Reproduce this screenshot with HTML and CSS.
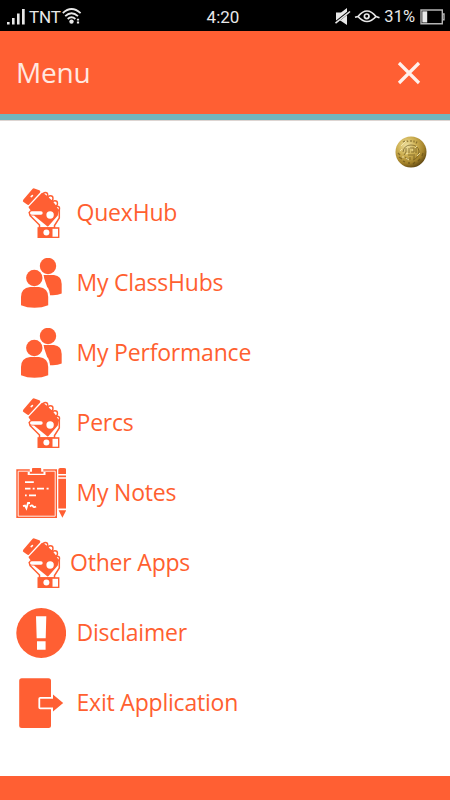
FILE: index.html
```html
<!DOCTYPE html>
<html lang="en">
<head>
  <meta charset="UTF-8" />
  <meta name="viewport" content="width=device-width, initial-scale=1.0" />
  <title>Menu</title>
  <link rel="stylesheet" href="styles.css">
</head>
<body>
  <!-- icons -->
  <svg class="sprite" width="0" height="0">
    <symbol id="hand" viewBox="0 0 50 50">
      <path fill="#fff" stroke="#ff5f33" stroke-width="1.5" d="M13.2 24.5Q13.3 27.5 16 29.5L23.5 37V40H38.5V37.5L43.3 30V20H30Z" />
      <path fill="#ff5f33" stroke="#ff5f33" stroke-width="3" stroke-linejoin="round" d="M8.4 12.8 17.8 1.8 22.8 3.7 12 15.4Z" />
      <path d="M15.2 8.6 16.4 7.6" stroke="#fff" stroke-width="1.6" stroke-linecap="round" />
      <g fill="#fff" stroke="#ff5f33" stroke-width="1.4">
        <circle cx="29.4" cy="6.8" r="2.3" />
        <circle cx="34.4" cy="10.4" r="2.6" />
        <circle cx="38.9" cy="15.4" r="2.6" />
        <circle cx="41.4" cy="20.4" r="2.1" />
      </g>
      <path fill="#ff5f33" stroke="#ff5f33" stroke-width="2" stroke-linejoin="round" d="M13.6 19.2 26.4 5.8 29 7.6 34 12 38.4 17 41.8 22.5 40.8 27.2 31.8 37.4 19.5 27.5Z" />
      <path stroke="#ff5f33" stroke-width="5.4" stroke-linecap="round" d="M15.7 24.8H24" />
      <path stroke="#fff" stroke-width="3.4" stroke-linecap="round" d="M15.7 25H25" />
      <circle cx="34.1" cy="27" r="3.7" fill="#fff" />
      <path fill="#ff5f33" d="M21.5 39.2H43.4V50.1H21.5Z" />
      <path fill="#fff" d="M36.5 40.8H42V48.7H36.5Z" />
      <circle cx="30.4" cy="44.6" r="3" fill="#fff" />
    </symbol>
    <symbol id="people" viewBox="0 0 50 50">
      <g fill="#ff5f33">
        <circle cx="32" cy="8" r="8.2" />
        <path d="M27 17H38Q45.7 18 45.7 26V35.5Q41 37.8 34 37.2Z" />
        <circle cx="18.3" cy="20" r="9.8" fill="#fff" />
        <circle cx="18.3" cy="20" r="8.2" />
        <path fill="#fff" d="M24 26.5Q34 27 34 38V40H24Z" />
        <path d="M14 29H23Q32.2 30 32.2 39V47.2Q26 49.8 18.5 49.8T5 47.2V39Q5 30 14 29Z" />
      </g>
    </symbol>
    <symbol id="notes" viewBox="0 0 50 50">
      <path fill="#ff5f33" d="M.3 1.3H41V50H.3Z" />
      <path fill="none" stroke="#fff" stroke-width=".9" d="M2.2 3.2H39.2V48.2H2.2Z" />
      <path fill="#fff" d="M13.8 0H27.3V4H29.5V7H11.7V4H13.8Z" />
      <path fill="#ff5f33" d="M16 1.2Q16 -.3 17.5 -.3H23.7Q25.2 -.3 25.2 1.2V3.8H27.5V5.7H13.8V3.8H16Z" />
      <g fill="none" stroke="#fff" stroke-width="1.8">
        <path d="M9 14.2H17.8M9 20.7H14.5M16.7 20.7H18.6M21 20.7H28M30.6 20.7H32.6M9 27.3H10.7M13 27.3H20" />
        <path d="M7 38.2 9 37.5 10.4 40.3 12 35H14M14 38.5Q16 36.5 17 38.2T20 38.5" />
      </g>
      <path fill="#ff5f33" d="M42.3 2Q42.3 0 44.3 0H48Q50.4 0 50.4 2V6H42.3ZM42.3 7.4H50.4V9.2H42.3ZM42.3 10.7H50.4V40.4H42.3ZM42.6 42.3H50.2L46.4 49.8Z" />
    </symbol>
    <symbol id="warn" viewBox="0 0 50 50">
      <circle cx="25.2" cy="25" r="24.9" fill="#ff5f33" />
      <path fill="#fff" d="M20 8.3H30.3L29.7 30.3H20.7ZM21 33.2H29.6V41.8H21Z" />
    </symbol>
    <symbol id="exit" viewBox="0 0 50 50">
      <rect x="3.2" y=".2" width="31.8" height="49.8" rx="2.5" fill="#ff5f33" />
      <path fill="#ff5f33" stroke="#fff" stroke-width="3.6" stroke-linejoin="round" paint-order="stroke" d="M24.2 20.7H37V16.5L47.2 25 37 33.5V29.5H24.2Z" />
    </symbol>
  </svg>

  <div class="status">
    <div class="status-left">
      <svg width="18" height="16" viewBox="0 0 18 16" fill="#e8e8e8">
        <path d="M0 13H2.6V15.5H0ZM5 9H7.6V15.5H5ZM10 4.5H12.6V15.5H10ZM15 0H17.7V15.5H15Z" />
      </svg>
      <span class="carrier">TNT</span>
      <svg class="wifi" width="20" height="17" viewBox="0 0 20 17" fill="none" stroke="#e8e8e8" stroke-width="1.8">
        <path d="M.8 5.1Q9.5 -3 18.6 5.1M3.2 8.2Q9.5 2.2 16 8.2M5.7 11Q9.5 7.5 13.4 11" />
        <circle cx="9.5" cy="13.6" r="2.2" fill="#e8e8e8" stroke="none" />
        <path d="M16 10.8V12.6M16 13.6V15.4" stroke-width="2.2" />
      </svg>
    </div>
    <span class="time">4:20</span>
    <div class="status-right">
      <svg width="16" height="18" viewBox="0 0 16 18">
        <path fill="#e8e8e8" d="M1 4.5H6L12 0V17L6 13H1Z" />
        <path stroke="#000" stroke-width="2.6" d="M0 15 15 3" />
        <path stroke="#e8e8e8" stroke-width="1.6" d="M.5 15.2 15 3.5" />
      </svg>
      <svg class="eye" width="25" height="13" viewBox="0 0 25 13" fill="none" stroke="#e8e8e8" stroke-width="1.7">
        <path d="M0 7.3 3 6.5Q12 -4.5 21 6.5L24.5 7.8M3 6.5Q12 16.5 21 6.5" />
        <circle cx="11.7" cy="6.3" r="2.3" />
      </svg>
      <span class="percent">31%</span>
      <svg class="battery" width="25" height="16" viewBox="0 0 25 16">
        <path fill="none" stroke="#b5b5b5" stroke-width="1.4" d="M1 1H22.3V14.8H1ZM22.5 5H24V10.8H22.5" />
        <path fill="#e8e8e8" d="M2.3 2.3H7.2V13.5H2.3Z" />
      </svg>
    </div>
  </div>

  <header class="header">
    <h1>Menu</h1>
    <svg class="close" width="22" height="22" viewBox="0 0 22 22">
      <path stroke="#fff1ec" stroke-width="3.2" d="M1 1 21 21M21 1 1 21" />
    </svg>
  </header>

  <main class="content">
    <div class="coin-row">
      <svg width="32" height="32" viewBox="0 0 32 32">
        <defs>
          <radialGradient id="gold" cx=".36" cy=".3" r=".75">
            <stop offset="0" stop-color="#eee0a0" />
            <stop offset=".4" stop-color="#cfb255" />
            <stop offset=".75" stop-color="#a5832a" />
            <stop offset="1" stop-color="#5c4411" />
          </radialGradient>
        </defs>
        <circle cx="16" cy="16" r="15.5" fill="url(#gold)" />
        <g fill="none" stroke="#5e4914" opacity=".6">
          <path d="M8 6 10 5M12 4.5 13 6M16 4V6M19 4.5V6.5M22 5.5 21 7.5M3 17 5 19M4 21 7 23M8 25 10 26M13 27H15M18 28 20 26M23 25 25 23M27 20 28 17" stroke-width="1.3" />
          <path d="M8 16Q9 9 16 9T24 15Q24 22 18 24M11 12V16L9 19M14 12V17M15 12H19V16H16M21 11V17M13 19H20M15 21V24M19 20V23M10 21 13 23" />
        </g>
        <path stroke="#fbf0bd" fill="none" opacity=".75" d="M6 10 11 5M5 15 7 13M11 18 13 17M17 14H18M22 20 25 17M11 22 14 24M20 12 22 10M7 21H9" />
      </svg>
    </div>
    <ul class="menu">
      <li><svg><use href="#hand" /></svg><span>QuexHub</span></li>
      <li><svg><use href="#people" /></svg><span>My ClassHubs</span></li>
      <li><svg><use href="#people" /></svg><span>My Performance</span></li>
      <li><svg><use href="#hand" /></svg><span>Percs</span></li>
      <li><svg><use href="#notes" /></svg><span>My Notes</span></li>
      <li class="tight"><svg><use href="#hand" /></svg><span>Other Apps</span></li>
      <li><svg><use href="#warn" /></svg><span>Disclaimer</span></li>
      <li><svg><use href="#exit" /></svg><span>Exit Application</span></li>
    </ul>
  </main>

  <footer class="footer"></footer>
</body>
</html>
```
FILE: styles.css
```css
* {
  box-sizing: border-box;
}
body {
  margin: 0;
  height: 800px;
  display: flex;
  flex-direction: column;
  font-family: "Open Sans", "Noto Sans", sans-serif;
  background: #fff;
  overflow: hidden;
}
svg {
  display: block;
  flex: none;
  overflow: visible;
}
.sprite {
  position: absolute;
}

/* status bar */
.status {
  height: 31px;
  flex: none;
  display: grid;
  grid-template-columns: 1fr auto 1fr;
  align-items: center;
  padding: 0 5px 0 7px;
  background: #000;
  color: #e8e8e8;
  font-family: Roboto, sans-serif;
  font-size: 17px;
  line-height: 31px;
}
.status-left,
.status-right {
  display: flex;
  align-items: center;
}
.status-right {
  justify-content: flex-end;
}
.carrier {
  margin-left: 4px;
  padding-top: 2px;
  letter-spacing: -0.2px;
}
.wifi {
  margin-left: 1px;
}
.time {
  padding-top: 2px;
  margin: 0 6px 0 0;
}
.eye {
  margin-left: 4px;
}
.percent {
  margin-left: 4px;
  font-size: 16.5px;
}
.battery {
  margin-left: 5px;
}

/* header */
.header {
  height: 89px;
  flex: none;
  display: flex;
  align-items: center;
  justify-content: space-between;
  padding: 0 30px 0 16px;
  background: #ff5f33;
  border-bottom: 6px solid #72b5bc;
}
.header h1 {
  margin: 0;
  padding-bottom: 1px;
  color: #ffe8e0;
  font-size: 28px;
  font-weight: 400;
  letter-spacing: -0.2px;
}

/* menu */
.content {
  flex: 1;
  border-top: 1px solid #ddd5d2;
}
.coin-row {
  display: flex;
  justify-content: flex-end;
  padding: 15px 23px 0 0;
}
.menu {
  list-style: none;
  margin: 10px 0 0;
  padding: 0 16px;
}
.menu li {
  height: 70px;
  display: flex;
  align-items: center;
  gap: 10.5px;
  color: #ff5f30;
  font-size: 23px;
  letter-spacing: -0.2px;
}
.menu li.tight {
  gap: 4px;
}
.menu span {
  padding-bottom: 2px;
}
.menu svg {
  width: 50px;
  height: 50px;
}
.footer {
  height: 24px;
  flex: none;
  background: #ff5f33;
}
```
